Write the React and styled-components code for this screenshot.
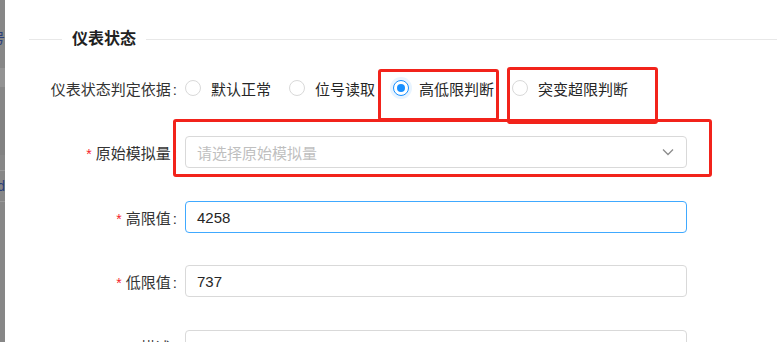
import React from 'react';
import styled, { createGlobalStyle } from 'styled-components';

const GlobalStyle = createGlobalStyle`
  html, body {
    margin: 0;
    padding: 0;
    background: #fff;
    overflow: hidden;
  }
  body {
    font-family: "Liberation Sans", "Noto Sans CJK SC", sans-serif;
  }
`

const Page = styled('div')`
  position: relative;
  width: 777px;
  height: 342px;
  overflow: hidden;
  display: flex;
  background: #fff;
`

const Backdrop = styled('div')`
  width: 5px;
  flex-shrink: 0;
  display: flex;
  flex-direction: column;
  background: #878787;
  overflow: hidden;
`

const Band = styled('div')`
  height: ${p => p.$h}px;
  flex-shrink: 0;
  background: ${p => p.$bg || 'transparent'};
  border-bottom: ${p => (p.$line ? '1px solid #9a9a9a' : 'none')};
  display: flex;
  align-items: center;
  justify-content: flex-end;
  font-size: 14px;
  white-space: nowrap;
  color: #2a3f7a;
`

const Modal = styled('div')`
  flex: 1;
  display: flex;
  flex-direction: column;
  background: #fff;
`

const TopStub = styled('div')`
  margin-left: 173px;
  width: 409px;
  height: 1px;
  background: #d2d2d2;
  border-radius: 0 0 2px 2px;
`

const Divider = styled('div')`
  margin-top: 27px;
  margin-left: 24px;
  height: 24px;
  display: flex;
  align-items: center;
`

const DividerLine = styled('div')`
  height: 1px;
  background: #e8e8e8;
  ${p => (p.$w ? `width: ${p.$w}px;` : 'flex: 1;')}
`

const DividerTitle = styled('div')`
  padding: 0 10px;
  font-size: 16px;
  font-weight: bold;
  line-height: 24px;
  color: #222;
`

const Row = styled('div')`
  margin-top: ${p => p.$mt}px;
  height: 32px;
  display: flex;
  align-items: center;
  flex-shrink: 0;
`

const Label = styled('div')`
  width: 180px;
  flex-shrink: 0;
  text-align: right;
  font-size: 15px;
  color: #333;
  white-space: nowrap;
`

const Required = styled('span')`
  color: #f5222d;
  font-size: 14px;
  margin-right: 4px;
`

const Colon = styled('span')`
  margin: 0 8px 0 2px;
`

const RadioGroup = styled('div')`
  display: flex;
  align-items: center;
`

const RadioItem = styled('label')`
  display: flex;
  align-items: center;
  margin-right: 8px;
  font-size: 15px;
  color: #262626;
  white-space: nowrap;
`

const RadioCircle = styled('span')`
  position: relative;
  width: 16px;
  height: 16px;
  box-sizing: border-box;
  border-radius: 50%;
  border: 1px solid ${p => (p.$checked ? '#1890ff' : '#d9d9d9')};
  background: #fff;
  box-shadow: ${p => (p.$checked ? '0 0 0 3px #e8f4ff' : 'none')};
  &::after {
    content: '';
    display: ${p => (p.$checked ? 'block' : 'none')};
    position: absolute;
    left: 3px;
    top: 3px;
    width: 8px;
    height: 8px;
    border-radius: 50%;
    background: #1890ff;
  }
`

const RadioText = styled('span')`
  padding: 0 10px;
`

const Field = styled('div')`
  width: 502px;
  height: 32px;
  box-sizing: border-box;
  border: 1px solid ${p => (p.$focused ? '#40a9ff' : '#d9d9d9')};
  border-radius: 4px;
  padding: 0 11px;
  display: flex;
  align-items: center;
  justify-content: space-between;
  font-size: 15px;
  color: #262626;
`

const Placeholder = styled('span')`
  color: #bfbfbf;
`

const Chevron = styled('svg')`
  width: 12px;
  height: 8px;
  margin-right: 1px;
`

const Mark = styled('div')`
  position: absolute;
  left: ${p => p.$x}px;
  top: ${p => p.$y}px;
  width: ${p => p.$w}px;
  height: ${p => p.$h}px;
  box-sizing: border-box;
  border: 3px solid #f2231b;
  border-radius: 3px;
  pointer-events: none;
`

const options = [
  { text: '默认正常', checked: false },
  { text: '位号读取', checked: false },
  { text: '高低限判断', checked: true },
  { text: '突变超限判断', checked: false },
]

function App() {
  return (
    <Page>
      <GlobalStyle />
      <Backdrop>
        <Band $h={30} />
        <Band $h={14}>编号</Band>
        <Band $h={24} />
        <Band $h={19} $bg="#939393" />
        <Band $h={23} />
        <Band $h={45} $bg="#828282" />
        <Band $h={15} $line />
        <Band $h={30} $line>dd</Band>
        <Band $h={140} />
      </Backdrop>
      <Modal>
        <TopStub />
        <Divider>
          <DividerLine $w={33} />
          <DividerTitle>仪表状态</DividerTitle>
          <DividerLine />
        </Divider>
        <Row $mt={21}>
          <Label>
            仪表状态判定依据<Colon>:</Colon>
          </Label>
          <RadioGroup>
            {options.map(o => (
              <RadioItem key={o.text}>
                <RadioCircle $checked={o.checked} />
                <RadioText>{o.text}</RadioText>
              </RadioItem>
            ))}
          </RadioGroup>
        </Row>
        <Row $mt={32}>
          <Label>
            <Required>*</Required>原始模拟量<Colon>:</Colon>
          </Label>
          <Field>
            <Placeholder>请选择原始模拟量</Placeholder>
            <Chevron viewBox="0 0 12 8">
              <path d="M1 1.5 L6 6.5 L11 1.5" fill="none" stroke="#8c8c8c" strokeWidth="1.3" />
            </Chevron>
          </Field>
        </Row>
        <Row $mt={33}>
          <Label>
            <Required>*</Required>高限值<Colon>:</Colon>
          </Label>
          <Field $focused>4258</Field>
        </Row>
        <Row $mt={32}>
          <Label>
            <Required>*</Required>低限值<Colon>:</Colon>
          </Label>
          <Field>737</Field>
        </Row>
        <Row $mt={33}>
          <Label>
            描述<Colon>:</Colon>
          </Label>
          <Field>3000</Field>
        </Row>
      </Modal>
      <Mark $x={378} $y={69} $w={121} $h={52} />
      <Mark $x={507} $y={67} $w={151} $h={57} />
      <Mark $x={173} $y={119} $w={539} $h={58} />
    </Page>
  );
}

export default App;
